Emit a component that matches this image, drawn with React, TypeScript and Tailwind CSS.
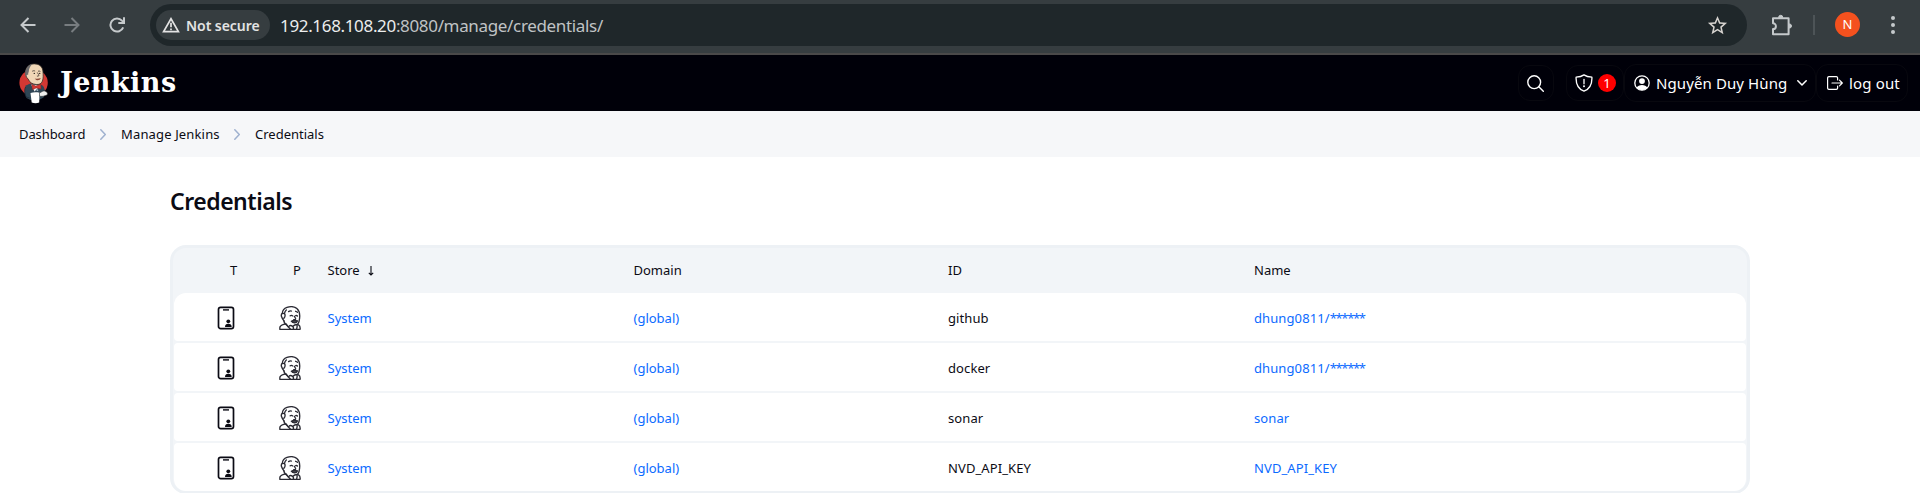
import React from "react";

type IconProps = { className?: string };

const BackIcon = ({ className }: IconProps) => (
  <svg viewBox="0 0 16 16" className={className} fill="none" stroke="currentColor" strokeWidth="2">
    <path d="M15.5 8H2M8.5 1 1.5 8l7 7" />
  </svg>
);

const ForwardIcon = ({ className }: IconProps) => (
  <svg viewBox="0 0 16 16" className={className} fill="none" stroke="currentColor" strokeWidth="2">
    <path d="M.5 8H14M7.5 1l7 7-7 7" />
  </svg>
);

const ReloadIcon = ({ className }: IconProps) => (
  <svg viewBox="0 0 16 16" className={className} fill="none" stroke="currentColor" strokeWidth="2">
    <path d="M14.2 10.4A6.6 6.6 0 1 1 13 3.6l1.5 1.6M15 .3V6H9.3" />
  </svg>
);

const WarningIcon = ({ className }: IconProps) => (
  <svg viewBox="0 0 18 16" className={className} fill="none" stroke="currentColor" strokeWidth="1.7">
    <path d="M9 1.8 1.6 14.6h14.8z" />
    <path d="M9 5.8v4.4M9 11.4v1.8" />
  </svg>
);

const StarIcon = ({ className }: IconProps) => (
  <svg viewBox="0 0 24 24" className={className} fill="currentColor">
    <path d="m22 9.24-7.19-.62L12 2 9.19 8.63 2 9.24l5.46 4.73L5.82 21 12 17.27 18.18 21l-1.63-7.03zM12 15.4l-3.76 2.27 1-4.28-3.32-2.88 4.38-.38L12 6.1l1.71 4.04 4.38.38-3.32 2.88 1 4.28z" />
  </svg>
);

const PuzzleIcon = ({ className }: IconProps) => (
  <svg viewBox="0 0 22 22" className={className} fill="none" stroke="currentColor" strokeWidth="2" strokeLinejoin="round">
    <path d="M2 4.2h15.6v16H2v-5.1a2.9 2.9 0 0 0 0-5.8z" />
    <path d="M7.6 3.6a2.1 2.3 0 0 1 4.2 0zM18.2 9.9a2.3 2.1 0 0 1 0 4.2z" fill="currentColor" strokeWidth="1" />
  </svg>
);

const SearchIcon = ({ className }: IconProps) => (
  <svg viewBox="0 0 17 17" className={className} fill="none" stroke="currentColor" strokeWidth="1.4" strokeLinecap="round">
    <circle cx="7.2" cy="7.2" r="6.4" />
    <path d="m11.8 11.8 4.5 4.4" />
  </svg>
);

const ShieldIcon = ({ className }: IconProps) => (
  <svg viewBox="0 0 18 18" className={className} fill="none" stroke="currentColor" strokeWidth="1.3" strokeLinejoin="round" strokeLinecap="round">
    <path d="M9 .9C6.8 2.4 4.2 3 1.1 3.2.8 9.8 3.2 15 9 17.2c5.8-2.2 8.2-7.4 7.9-14C13.8 3 11.2 2.4 9 .9z" />
    <path d="M9 5.4v4.4" />
    <circle cx="9" cy="12.3" r=".4" fill="currentColor" />
  </svg>
);

const PersonIcon = ({ className }: IconProps) => (
  <svg viewBox="0 0 16 16" className={className}>
    <circle cx="8" cy="8" r="7.2" fill="none" stroke="currentColor" strokeWidth="1.3" />
    <circle cx="8" cy="6.1" r="2.9" fill="currentColor" />
    <path d="M2.6 12.8c1-2 3-2.8 5.4-2.8s4.4.8 5.4 2.8A7.2 7.2 0 0 1 8 15.2a7.2 7.2 0 0 1-5.4-2.4z" fill="currentColor" />
  </svg>
);

const ChevronDown = ({ className }: IconProps) => (
  <svg viewBox="0 0 10 6" className={className} fill="none" stroke="currentColor" strokeWidth="1.5" strokeLinecap="round" strokeLinejoin="round">
    <path d="m.8.8 4.2 4.2L9.2.8" />
  </svg>
);

const ChevronRight = ({ className }: IconProps) => (
  <svg viewBox="0 0 6 11" className={className} fill="none" stroke="currentColor" strokeWidth="1.5" strokeLinecap="round" strokeLinejoin="round">
    <path d="m.8.8 4.5 4.7L.8 10.2" />
  </svg>
);

const LogoutIcon = ({ className }: IconProps) => (
  <svg viewBox="0 0 16 14" className={className} fill="none" stroke="currentColor" strokeWidth="1.2" strokeLinecap="round" strokeLinejoin="round">
    <path d="M10.6 4V1.9A1.3 1.3 0 0 0 9.3.7H1.9A1.3 1.3 0 0 0 .6 1.9v10.2a1.3 1.3 0 0 0 1.3 1.2h7.4a1.3 1.3 0 0 0 1.3-1.2V10M5 7h10.3M12.5 4.2 15.3 7l-2.8 2.8" />
  </svg>
);

const SortArrow = ({ className }: IconProps) => (
  <svg viewBox="0 0 6 10" className={className} fill="none" stroke="currentColor" strokeWidth="1.1">
    <path d="M3 0v9M.8 6.8 3 9l2.2-2.2" />
  </svg>
);

const PhoneIcon = ({ className }: IconProps) => (
  <svg viewBox="0 0 18 24" className={className}>
    <rect x="1.5" y="1.4" width="15" height="21.2" rx="2.2" fill="none" stroke="#0b0b14" strokeWidth="1.7" />
    <path d="M6 3.9h6" stroke="#0b0b14" strokeWidth="1.4" />
    <circle cx="11.3" cy="15.3" r="1.9" fill="#0b0b14" />
    <path d="M8 21c0-2.4 1.2-3.3 3.3-3.3s3.4.9 3.4 3.3z" fill="#0b0b14" />
  </svg>
);

const ButlerIcon = ({ className }: IconProps) => (
  <svg viewBox="0 0 22 24" className={className} fill="none" stroke="#2a2a33" strokeWidth="1.35" strokeLinecap="round" strokeLinejoin="round">
    <path d="M4.8 14.6C3.6 13 3 12.1 2.5 10.5c-.5-1.6.1-2.9.9-3.6.1-2.7 2-4.7 4.6-5.6 3-1 7.6-.9 9.9 1.3 2.3 2 3 5 2.8 8.2-.1 2.8-.2 5.4-2.1 7.5" />
    <path d="M4.8 14.6c.2 2 1.5 3.6 3.6 4.9M3.4 7.6c1.4-.6 2.6.2 2.7 1.5.1 1.6-.4 2.6-1.3 3.3M5.400 7.8c.3-1.6.9-3 1.9-3.8" />
    <path d="M9.6 5.600c.9-.7 1.9-.8 2.8-.5M16.600 5.300c.8.1 1.4.4 1.9 1M11.200 9.800c.8-.6 1.800-.5 2.500.1M16.700 9.600c.7-.2 1.300 0 1.800.4M15.300 10.300c.7 1.400 1.700 1.900 1.300 2.800-.4.6-1.200.6-1.900.5" />
    <path d="M12.3 15.2c1.6-1 4-1 6.2-.3-.6 2.4-4.4 2.8-6.2.3z" fill="#4a4a52" />
    <path d="M6.900 17.800c-2.600.5-5 1.400-5.900 3.100-.2.8-.2 1.600-.1 2.400h20.200c.2-1.900-.2-3.700-1.600-4.500M6.900 17.800c.8 1.800 2.600 3.600 4.600 5.300M10 20.200c1-1 2.200-.8 3.600.2 1.200-1 2.800-1.800 4.400-1.900.3 1.600.2 3-.4 4.400M13.600 20.400c.9.7 1.100 1.700.5 2.700" />
  </svg>
);

const JenkinsLogo = ({ className }: IconProps) => (
  <svg viewBox="0 0 30 41" className={className}>
    <ellipse cx="14.6" cy="19.8" rx="14.2" ry="13.5" fill="#d33833" />
    <path d="M6.5 22.5c2.5-.8 3.9-1.8 5.5-2l8 .5c3 .8 4.700 2 5.300 4.500l1.700 5-2.500 4-4.500 2.500H11.500L7.500 35l-1.800-5z" fill="#2f4656" />
    <path d="M6.600 24c-1.500 2.500-1.200 6.100.6 10l3.300 1" fill="none" stroke="#1d2b36" strokeWidth=".8" />
    <path d="M12 21.500l3.500 7 6-6z" fill="#f3f3f3" />
    <path d="M6.500 8.500C7.200 3.500 10.800.9 15.500.9c5 0 8.200 2.800 8.500 8 .2 3.500.4 6.200-.6 9.200-.9 2.700-3.400 3.600-6.200 3.400-3.500-.3-6.700-1.900-8-5.400-1.900-1.400-3-4.600-2.700-7.600z" fill="#f0d6b7" stroke="#3a312b" strokeWidth=".8" />
    <path d="M6.300 9C7 4.500 9.800 1.600 13.500 1c-2.300 2-3.600 4.500-3.700 7.500-.3 1.200-.9 2-.6 3.600-1.700-1-2.300 1-1.200 3C6.500 13.500 6 11.500 6.300 9z" fill="#6d6b6d" />
    <path d="M13.200 8.300c1-.7 2-.7 2.900-.2M19 8.200c.9-.3 1.700-.2 2.400.3M18.300 9.500c.8 1.600 2 2.400 1.500 3.300-.5.5-1.300.4-1.900.2" fill="none" stroke="#3a312b" strokeWidth=".8" />
    <circle cx="15.3" cy="10.4" r=".7" fill="#2b2420" />
    <circle cx="20.7" cy="10.4" r=".7" fill="#2b2420" />
    <path d="M15.8 15.6c2 .5 4 .3 6-.5-.8 2.8-4.700 3-6 .5z" fill="#8b4a3a" />
    <path d="M12.600 21.300l4.300 1.800 4.800-2 .4 4.800-5-1-3.600 1.800z" fill="#d33833" stroke="#81231f" strokeWidth=".5" />
    <circle cx="18.4" cy="27.2" r=".9" fill="#9db3c2" />
    <path d="M11.500 30c3-.8 6-.8 9-.2l-.3 9.700c-2.400.9-5 .9-7.500 0z" fill="#fff" />
    <path d="M20.500 29.800c2-.3 2.800-2.200 5-1.800 1.400.5 3.200 1.300 3 3-.3 1.500-2 1.500-3 1.700-1.500.8-3.300.8-5 .3z" fill="#eee" stroke="#333" strokeWidth=".5" />
  </svg>
);

const crumbs = [
  { label: "Dashboard", box: "w-[66px] tracking-[-0.1px]" },
  { label: "Manage Jenkins", box: "w-[98px] tracking-[0.15px]" },
  { label: "Credentials", box: "w-[80px]" },
];

const rows = [
  { id: "github", name: "dhung0811/", mask: "******" },
  { id: "docker", name: "dhung0811/", mask: "******" },
  { id: "sonar", name: "sonar", mask: "" },
  { id: "NVD_API_KEY", name: "NVD_API_KEY", mask: "" },
];

const columns = "grid grid-cols-[43px_62px_48.5px_306px_314.5px_306px_1fr] items-center";

function BrowserBar() {
  return (
    <div className="flex h-[55px] items-start border-b-2 border-[#4a4949] bg-[#363d40] text-[#c5c9cb]">
      <div className="flex h-[49px] w-[150px] shrink-0 items-center pl-5">
        <BackIcon className="size-4" />
        <ForwardIcon className="ml-7 size-4 text-[#787d80]" />
        <ReloadIcon className="ml-[29px] size-4" />
      </div>
      <div className="mt-1 flex h-[42px] w-[1597px] shrink-0 items-center rounded-full bg-[#1f272a] pr-[18px] pl-1.5">
        <div className="flex h-[30px] w-[114px] items-center rounded-full bg-[#363d40] pl-1.5 text-[#e3e3e3]">
          <WarningIcon className="h-4 w-[18px]" />
          <span className="ml-1.5 text-[14px] font-semibold tracking-[-0.05px]">Not secure</span>
        </div>
        <div className="ml-2.5 pt-px text-[17px] tracking-[-0.34px] text-[#c0c3c5]">
          <span className="text-[#eceded]">192.168.108.20</span>:8080/manage/credentials/
        </div>
        <StarIcon className="ml-auto size-[23px] text-[#d6d3cf]" />
      </div>
      <div className="flex h-[49px] flex-1 items-center pl-6">
        <PuzzleIcon className="size-[22px]" />
        <div className="ml-5 h-5 w-[2px] bg-[#4d5457]" />
        <div className="ml-5 flex size-[25px] items-center justify-center rounded-full bg-[#f4511e] text-[13px] text-white">N</div>
        <div className="ml-[31px] flex flex-col gap-[3px]">
          <i className="size-1 rounded-full bg-current" />
          <i className="size-1 rounded-full bg-current" />
          <i className="size-1 rounded-full bg-current" />
        </div>
      </div>
    </div>
  );
}

function Header() {
  return (
    <header className="flex h-14 items-center bg-[#000009] pl-[19px] text-white">
      <JenkinsLogo className="h-[41px] w-[30px]" />
      <span className="ml-[11px] pb-px font-['DejaVu_Serif'] text-[27px] leading-none font-bold tracking-[0.45px]">Jenkins</span>
      <div className="mr-3 ml-auto flex items-center">
        <div className="mr-3 flex h-9 w-9 items-center rounded-xl border border-[#08080f] pl-2">
          <SearchIcon className="size-[17px]" />
        </div>
        <div className="flex h-9 w-[58px] items-center rounded-xl border border-[#08080f] pl-2">
          <ShieldIcon className="size-[18px]" />
          <span className="ml-[5px] flex size-[18px] items-center justify-center rounded-full bg-[#f00] text-[13px] leading-none">1</span>
        </div>
        <div className="flex h-[38px] w-[192px] items-center rounded-xl border border-[#08080f] pl-[9px]">
          <PersonIcon className="size-4" />
          <span className="ml-1.5 w-[132px] text-[15px] tracking-[0.1px] whitespace-nowrap">Nguyễn Duy Hùng</span>
          <ChevronDown className="ml-[9px] h-1.5 w-2.5" />
        </div>
        <div className="flex h-[38px] w-[92px] items-center rounded-xl border border-[#08080f] pl-2.5">
          <LogoutIcon className="h-3.5 w-4" />
          <span className="ml-1.5 text-[15px] tracking-[0.15px] whitespace-nowrap">log out</span>
        </div>
      </div>
    </header>
  );
}

export default function App() {
  return (
    <div className="h-[493px] w-[1920px] overflow-hidden bg-white font-['Noto_Sans',sans-serif] text-[#0b0b14]">
      <BrowserBar />
      <Header />
      <nav className="flex h-[46px] items-center bg-[#f6f7f9] pt-px pl-[19px] text-[13px] whitespace-nowrap">
        {crumbs.map((crumb, i) => (
          <React.Fragment key={crumb.label}>
            {i > 0 && <ChevronRight className="mr-[15px] ml-[15px] h-[11px] w-1.5 text-[#9fb1cf]" />}
            <span className={crumb.box}>{crumb.label}</span>
          </React.Fragment>
        ))}
      </nav>
      <main className="pl-[170px]">
        <h1 className="mt-7 mb-7 text-[23px] leading-8 font-semibold tracking-[-0.48px]">Credentials</h1>
        <div className="w-[1580px] rounded-2xl border-[3px] border-[#edf1f5] bg-[#f2f5f8] px-px text-[13px]">
          <div className={`${columns} h-[45px]`}>
            <span />
            <span className="pl-[13px]">T</span>
            <span className="pl-[14px]">P</span>
            <span className="flex items-center">
              Store
              <SortArrow className="ml-2 h-2.5 w-1.5" />
            </span>
            <span>Domain</span>
            <span>ID</span>
            <span>Name</span>
          </div>
          <div className="flex flex-col gap-0.5">
            {rows.map((row) => (
              <div key={row.id} className={`${columns} h-12 rounded-[4px] bg-white pt-[3px] first:rounded-t-xl last:rounded-b-xl`}>
                <span />
                <PhoneIcon className="mb-0.5 h-6 w-[18px]" />
                <ButlerIcon className="mb-0.5 h-6 w-[22px]" />
                <a className="text-[#0b6aff]">System</a>
                <a className="text-[#0b6aff]">(global)</a>
                <span className="tracking-[0.1px]">{row.id}</span>
                <a className="text-[#0b6aff]">
                  <span className="tracking-[0.1px]">{row.name}</span>
                  <span className="tracking-[-1.35px]">{row.mask}</span>
                </a>
              </div>
            ))}
          </div>
        </div>
      </main>
    </div>
  );
}
